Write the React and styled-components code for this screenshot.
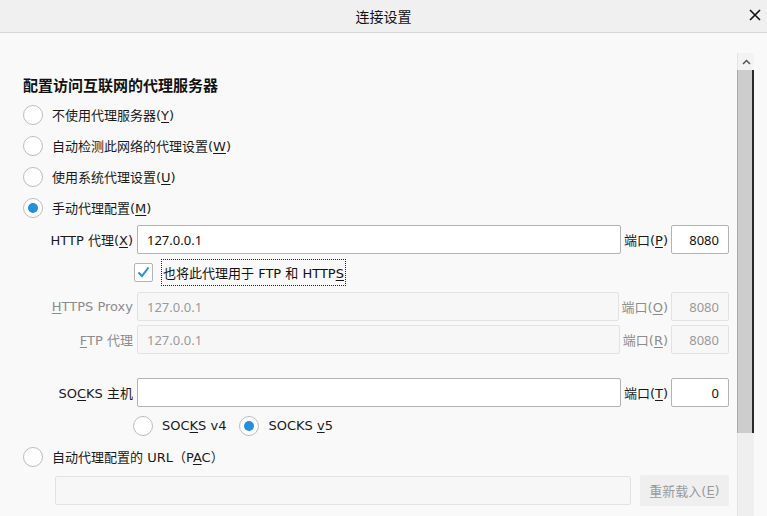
import React from "react";
import styled, { createGlobalStyle } from "styled-components";

const GlobalStyle = createGlobalStyle`
  html, body {
    margin: 0;
    padding: 0;
    background: #f9f9f9;
  }
  body {
    font-family: "DejaVu Sans", "Noto Sans CJK SC", sans-serif;
    font-size: 13px;
    color: #1a1a1a;
  }
`;

const Window = styled.div`
  width: 767px;
  height: 516px;
  display: flex;
  flex-direction: column;
  overflow: hidden;
  background: #f9f9f9;
`;

const TitleBar = styled.div`
  height: 32px;
  flex-shrink: 0;
  display: flex;
  align-items: center;
  justify-content: center;
  position: relative;
  background: #f0f0f0;
  border-bottom: 1px solid #d6d6da;
`;

const Title = styled.div`
  font-size: 14px;
  color: #111;
`;

const CloseButton = styled.div`
  position: absolute;
  right: 6px;
  top: 9px;
  width: 12px;
  height: 12px;
  display: flex;
`;

const Body = styled.div`
  flex: 1;
  display: flex;
  min-height: 0;
`;

const Content = styled.div`
  flex: 1;
  padding: 43px 8px 0 23px;
  display: flex;
  flex-direction: column;
`;

const Heading = styled.div`
  font-size: 15px;
  font-weight: bold;
  line-height: 20px;
  margin-bottom: 3px;
  color: #111;
`;

const RadioRow = styled.label`
  height: 31px;
  display: flex;
  align-items: center;
  gap: 9px;
  color: ${(p) => (p.disabled ? "#8c8c8c" : "#1a1a1a")};
`;

const Circle = styled.span`
  width: 20px;
  height: 20px;
  box-sizing: border-box;
  border-radius: 50%;
  border: 1px solid #bdbdbd;
  background: #fff;
  display: flex;
  align-items: center;
  justify-content: center;
  flex-shrink: 0;
  &::after {
    content: "";
    width: 10px;
    height: 10px;
    border-radius: 50%;
    background: ${(p) => (p.checked ? "#2390d8" : "transparent")};
  }
`;

const Radio = ({ checked, children }) => (
  <RadioRow>
    <Circle checked={checked} />
    <span>{children}</span>
  </RadioRow>
);

const FieldRow = styled.div`
  height: 29px;
  display: flex;
  align-items: center;
  margin-top: ${(p) => p.mt || 0}px;
  color: ${(p) => (p.disabled ? "#8c8c8c" : "#1a1a1a")};
`;

const FieldLabel = styled.div`
  width: 110px;
  text-align: right;
  margin-right: 4px;
  white-space: nowrap;
`;

const TextBox = styled.div`
  flex: 1;
  height: 29px;
  box-sizing: border-box;
  border: 1px solid ${(p) => (p.disabled ? "#e2e2e2" : "#b3b3b3")};
  border-radius: 2px;
  background: ${(p) => (p.disabled ? "#f7f7f7" : "#fff")};
  color: ${(p) => (p.disabled ? "#9a9a9a" : "#111")};
  display: flex;
  align-items: center;
  padding: 0 9px;
  font-family: "Noto Sans", "Noto Sans CJK SC", sans-serif;
  font-size: 13px;
`;

const PortLabel = styled.div`
  margin: 0 3px;
  white-space: nowrap;
`;

const PortBox = styled(TextBox)`
  flex: none;
  width: 58px;
  justify-content: flex-end;
`;

const CheckRow = styled.div`
  height: 36px;
  display: flex;
  align-items: center;
  padding-left: 111px;
  gap: 9px;
`;

const CheckBox = styled.span`
  width: 19px;
  height: 19px;
  box-sizing: border-box;
  border: 1px solid #b3b3b3;
  border-radius: 2px;
  background: #fff;
  display: flex;
  align-items: center;
  justify-content: center;
`;

const FocusLabel = styled.span`
  outline: 1px dotted #222;
  padding: 3px 1px;
  color: #111;
`;

const SocksRow = styled.div`
  display: flex;
  gap: 13px;
  margin-left: 110px;
  margin-top: 3px;
`;

const PacRow = styled.div`
  display: flex;
  align-items: center;
  margin-left: 32px;
  margin-top: 3px;
  gap: 9px;
`;

const ReloadButton = styled.div`
  width: 89px;
  height: 31px;
  border-radius: 2px;
  background: #efefef;
  color: #9a9a9a;
  display: flex;
  align-items: center;
  justify-content: center;
`;

const ScrollBar = styled.div`
  width: 17px;
  margin: 20px 13px 0 0;
  display: flex;
  flex-direction: column;
  background: #efefef;
  border-left: 1px solid #e4e4e4;
  box-sizing: border-box;
`;

const ArrowUp = styled.div`
  height: 17px;
  background: #f3f3f3;
  display: flex;
  align-items: center;
  justify-content: center;
`;

const Thumb = styled.div`
  height: 363px;
  background: #cdcdcd;
  border-left: 1px solid #a9a9a9;
  border-right: 2px solid #2a2a2a;
  margin-left: -1px;
`;

const Key = styled.u`
  text-underline-offset: 2px;
`;

export default function App() {
  return (
    <Window>
      <GlobalStyle />
      <TitleBar>
        <Title>连接设置</Title>
        <CloseButton>
          <svg width="12" height="12" viewBox="0 0 12 12">
            <path d="M1 1 L11 11 M11 1 L1 11" stroke="#111" strokeWidth="1.6" />
          </svg>
        </CloseButton>
      </TitleBar>
      <Body>
        <Content>
          <Heading>配置访问互联网的代理服务器</Heading>
          <Radio>不使用代理服务器(<Key>Y</Key>)</Radio>
          <Radio>自动检测此网络的代理设置(<Key>W</Key>)</Radio>
          <Radio>使用系统代理设置(<Key>U</Key>)</Radio>
          <Radio checked>手动代理配置(<Key>M</Key>)</Radio>

          <FieldRow mt={2}>
            <FieldLabel>HTTP 代理(<Key>X</Key>)</FieldLabel>
            <TextBox>127.0.0.1</TextBox>
            <PortLabel>端口(<Key>P</Key>)</PortLabel>
            <PortBox>8080</PortBox>
          </FieldRow>
          <CheckRow>
            <CheckBox>
              <svg width="13" height="12" viewBox="0 0 13 12">
                <path d="M1.5 6.5 L5 10 L11.5 1.5" fill="none" stroke="#2390d8" strokeWidth="2" />
              </svg>
            </CheckBox>
            <FocusLabel>
              也将此代理用于 FTP 和 HTTP<Key>S</Key>
            </FocusLabel>
          </CheckRow>
          <FieldRow disabled mt={2}>
            <FieldLabel><Key>H</Key>TTPS Proxy</FieldLabel>
            <TextBox disabled>127.0.0.1</TextBox>
            <PortLabel>端口(<Key>O</Key>)</PortLabel>
            <PortBox disabled>8080</PortBox>
          </FieldRow>
          <FieldRow disabled mt={4}>
            <FieldLabel><Key>F</Key>TP 代理</FieldLabel>
            <TextBox disabled>127.0.0.1</TextBox>
            <PortLabel>端口(<Key>R</Key>)</PortLabel>
            <PortBox disabled>8080</PortBox>
          </FieldRow>
          <FieldRow mt={24}>
            <FieldLabel>SO<Key>C</Key>KS 主机</FieldLabel>
            <TextBox />
            <PortLabel>端口(<Key>T</Key>)</PortLabel>
            <PortBox>0</PortBox>
          </FieldRow>
          <SocksRow>
            <Radio>SOC<Key>K</Key>S v4</Radio>
            <Radio checked>SOCKS <Key>v</Key>5</Radio>
          </SocksRow>
          <Radio>自动代理配置的 URL（P<Key>A</Key>C）</Radio>
          <PacRow>
            <TextBox disabled />
            <ReloadButton>重新载入(<Key>E</Key>)</ReloadButton>
          </PacRow>
        </Content>
        <ScrollBar>
          <ArrowUp>
            <svg width="9" height="6" viewBox="0 0 9 6">
              <path d="M1 5 L4.5 1.5 L8 5" fill="none" stroke="#555" strokeWidth="1.5" />
            </svg>
          </ArrowUp>
          <Thumb />
        </ScrollBar>
      </Body>
    </Window>
  );
}
